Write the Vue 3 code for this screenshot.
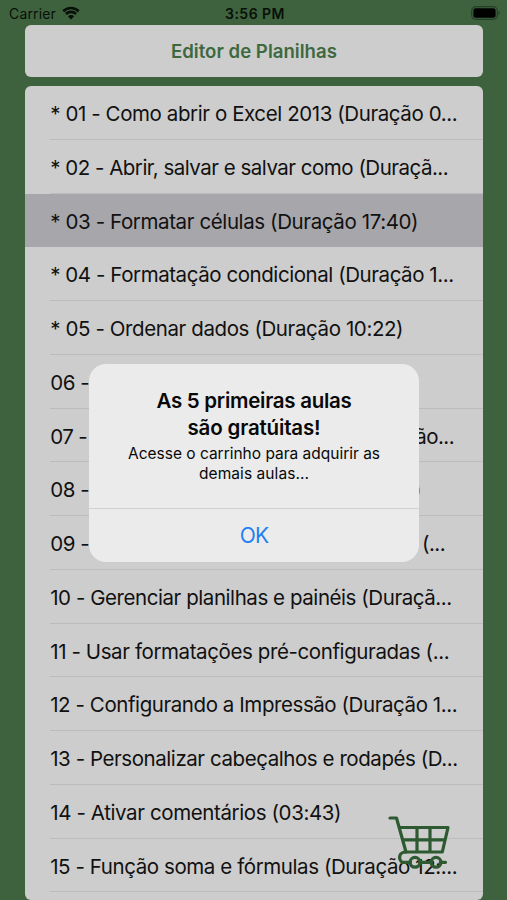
<script setup>
const lessons = [
  { head: '* 01 - Como abrir o Excel 2013 (Duração 0...', width: 407 },
  { head: '* 02 - Abrir, salvar e salvar como (Duraçã...', width: 398 },
  { head: '* 03 - Formatar células (Duração 17:40)', width: 368, selected: true },
  { head: '* 04 - Formatação condicional (Duração 1...', width: 403.5 },
  { head: '* 05 - Ordenar dados (Duração 10:22)', width: 353 },
  { head: '06 -', width: 39 },
  { head: '07 -', width: 37, tail: 'ão...', end: 404 },
  { head: '08 -', width: 39, tail: ')', end: 370.7 },
  { head: '09 -', width: 39, tail: '(...', end: 395 },
  { head: '10 - Gerenciar planilhas e painéis (Duraçã...', width: 401.5 },
  { head: '11 - Usar formatações pré-configuradas (...', width: 399 },
  { head: '12 - Configurando a Impressão (Duração 1...', width: 407 },
  { head: '13 - Personalizar cabeçalhos e rodapés (D...', width: 407.5 },
  { head: '14 - Ativar comentários (03:43)', width: 291 },
  { head: '15 - Função soma e fórmulas (Duração 12:...', width: 407 },
]

// Adjusts tracking so that a label takes its intended width.
const vFit = {
  mounted(el, { value }) {
    const natural = el.getBoundingClientRect().width
    el.style.letterSpacing = `${(value - natural) / el.textContent.length}px`
  },
}
</script>

<template>
  <main class="screen">
    <header class="status">
      <div class="carrier">
        <span v-fit="47">Carrier</span>
        <svg class="wifi" viewBox="0 0 18 14">
          <path d="M1.3 5.2a11 11 0 0 1 15.4 0M3.9 8a7.3 7.3 0 0 1 10.2 0" />
          <path class="solid" d="M9 13.4 5.9 10.2a4.4 4.4 0 0 1 6.2 0Z" />
        </svg>
      </div>
      <div class="time"><span v-fit="60">3:56 PM</span></div>
      <div class="power">
        <svg viewBox="0 0 30 14">
          <rect class="shell" x=".7" y=".7" width="25.6" height="12.6" rx="4" />
          <rect x="2.4" y="2.3" width="22.2" height="9.4" rx="2.3" />
          <path class="tip" d="M27.5 4.8q3 2.2 0 4.4Z" />
        </svg>
      </div>
    </header>

    <h1 class="title"><span v-fit="166">Editor de Planilhas</span></h1>

    <ul class="list">
      <li v-for="l in lessons" :key="l.head" :class="['row', { selected: l.selected }]">
        <div class="label" :style="{ width: l.end ? l.end + 'px' : undefined }">
          <span v-fit="l.width">{{ l.head }}</span>
          <span v-if="l.tail" class="tail">{{ l.tail }}</span>
        </div>
      </li>
    </ul>

    <svg class="cart" viewBox="0 0 64 56">
      <path d="M3 3H9.500L19 37H55.300L61 12.500H12.500M15.500 24.800H58M30 13V37M43 13V37" />
      <path d="M19 37C12.500 37 10.500 43 15 47.300H23.500M32.500 47.300H44.300M53.300 47.300H58.500" />
      <circle cx="28" cy="47.300" r="4.900" />
      <circle cx="49" cy="47.300" r="4.900" />
    </svg>

    <section class="alert" role="alertdialog">
      <div class="message">
        <h2><span v-fit="195">As 5 primeiras aulas</span><br><span v-fit="133">são gratúitas!</span></h2>
        <p><span v-fit="252">Acesse o carrinho para adquirir as</span><br><span v-fit="110">demais aulas...</span></p>
      </div>
      <button type="button">OK</button>
    </section>
  </main>
</template>

<style>
body { margin: 0; }
</style>

<style scoped>
* { box-sizing: border-box; }
.screen {
  position: relative;
  width: 507px;
  height: 900px;
  overflow: hidden;
  background: #3e623e;
  color: #111;
  font-family: Inter, "Liberation Sans", sans-serif;
}
span { display: inline-block; white-space: nowrap; }
.status {
  display: grid;
  grid-template-columns: 1fr auto 1fr;
  align-items: center;
  height: 25px;
  padding: 2px 6px 0 9px;
  font-size: 14px;
  color: #071007;
}
.carrier { display: flex; align-items: center; gap: 6px; }
.time { font-weight: 600; }
.wifi { width: 18px; height: 14px; margin-top: -2px; fill: none; stroke: #071007; stroke-width: 2.6; }
.wifi .solid { fill: #071007; stroke: none; }
.power { display: flex; justify-content: flex-end; }
.power svg { width: 30px; height: 14px; margin-top: -1px; fill: #000; }
.power .shell { fill: none; stroke: #263f26; stroke-width: 1.2; }
.power .tip { fill: #2a442a; }
.title {
  display: flex;
  align-items: center;
  justify-content: center;
  width: 457.5px;
  height: 51.5px;
  margin: 0 0 9.5px 25.2px;
  padding-top: 1px;
  border-radius: 6px;
  background: #cdcdcd;
  color: #3e693f;
  font-size: 18.6px;
  font-weight: 600;
}
.list {
  width: 457.5px;
  height: 814px;
  margin: 0 0 0 25.2px;
  padding: 0;
  overflow: hidden;
  list-style: none;
  border-radius: 6px;
  background: #cdcdcd;
}
.row { height: 53.76px; padding-left: 25px; }
.label {
  display: flex;
  align-items: center;
  justify-content: space-between;
  height: 100%;
  padding-top: 1.6px;
  font-size: 20.5px;
}
.tail { letter-spacing: -.5px; }
.row:not(.selected) { background: linear-gradient(#bcbcbf, #bcbcbf) 25px 100% / 100% 1px no-repeat; }
.row.selected { background: #a7a6ab; }
.cart {
  position: absolute;
  left: 387px;
  top: 815px;
  width: 64px;
  height: 56px;
  fill: none;
  stroke: #2d5a31;
  stroke-width: 3.2;
  stroke-linecap: round;
  stroke-linejoin: round;
}
.alert {
  position: absolute;
  left: 89px;
  top: 364px;
  display: flex;
  flex-direction: column;
  width: 330px;
  height: 198px;
  border-radius: 17px;
  background: #ebebeb;
  color: #080808;
  text-align: center;
  overflow: hidden;
}
.message { flex: 1; padding-top: 23px; border-bottom: 1px solid #d0d0d0; }
h2 { margin: 0; font-size: 20.5px; line-height: 27px; font-weight: 600; }
p { margin: 2.5px 0 0; font-size: 15.5px; line-height: 20px; }
button {
  height: 53px;
  padding: 0;
  border: 0;
  background: none;
  color: #1d80f0;
  font: 21px Inter, sans-serif;
  letter-spacing: -.9px;
}
</style>
